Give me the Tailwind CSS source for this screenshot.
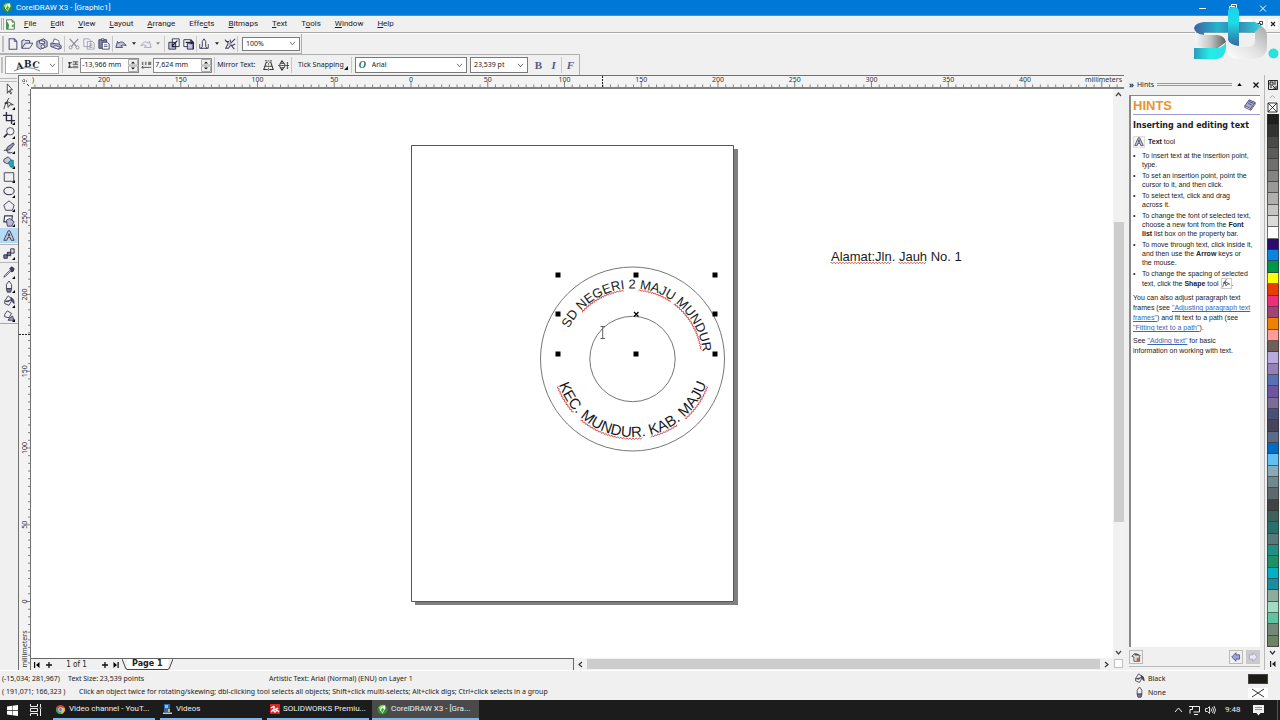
<!DOCTYPE html>
<html lang="en">
<head>
<meta charset="utf-8">
<title>CorelDRAW X3 - [Graphic1]</title>
<script src="https://cdn.jsdelivr.net/npm/@tailwindcss/browser@4"></script>
</head>
<body class="h-screen overflow-hidden flex flex-col bg-[#f0f0f0] text-[#222] font-['Noto_Sans',sans-serif] text-[7px] leading-[10px] cursor-default">

<svg class="hidden" aria-hidden="true">
  <defs>
    <linearGradient id="lav" x1="0" y1="0" x2="1" y2="1"><stop offset="0" stop-color="#fff"/><stop offset="1" stop-color="#9c9cc8"/></linearGradient>
  </defs>
  <symbol id="i-corel" viewBox="0 0 14 14"><circle cx="7" cy="7" r="6.5" fill="#2f8f2c"/><path d="M2 4Q6 0 11 2L8 6 3 7Z" fill="#8ed45c"/><path d="M5 4l5-2 1 3-4 7-3-4z" fill="#fff"/><path d="M7 4l2 3-2 4-2-3z" fill="#4aa63c"/></symbol>
  <symbol id="i-doc" viewBox="0 0 14 14"><path d="M2 1h7l3 3v9H2z" fill="#fff" stroke="#37623a"/><path d="M9 1v3h3" fill="none" stroke="#37623a"/><path d="M2 3q5 4 2 10H2z" fill="#3b9a3b"/><path d="M8 9l3-3v5z" fill="#3b9a3b"/></symbol>
  <symbol id="i-new" viewBox="0 0 14 14"><path d="M2.500 1h6l3 3v9h-9z" fill="url(#lav)" stroke="#50507a" stroke-width="1.200"/><path d="M8.500 1v3h3" fill="none" stroke="#50507a"/></symbol>
  <symbol id="i-open" viewBox="0 0 14 14"><path d="M1 12V3l3-1 1 1h5v3" fill="#dcdcf2" stroke="#3c3c5c"/><path d="M1 12l4-6h9l-4 6z" fill="url(#lav)" stroke="#3c3c5c"/></symbol>
  <symbol id="i-save" viewBox="0 0 14 14"><path d="M1 4l8-3 4 3v6l-8 3-4-3z" fill="#c4c4e0" stroke="#3c3c5c"/><path d="M4 3l6 1v3L4 6z" fill="#fff" stroke="#3c3c5c"/><circle cx="8" cy="10" r="2" fill="#fff" stroke="#3c3c5c"/></symbol>
  <symbol id="i-print" viewBox="0 0 14 14"><path d="M3 6l2-5 5 2 1 4" fill="#fff" stroke="#50507a"/><path d="M1 6l9 1 3 2v3l-3 1-9-3z" fill="#b4b4d8" stroke="#3c3c5c"/><path d="M5 9l6 1-1 3-6-2z" fill="#fff" stroke="#50507a"/></symbol>
  <symbol id="i-cut" viewBox="0 0 14 14"><path d="M2 1l8 9M12 1L4 10" fill="none" stroke="#8a8a96" stroke-width="1.4"/><circle cx="3" cy="11" r="1.8" fill="none" stroke="#8a8a96"/><circle cx="11" cy="11" r="1.8" fill="none" stroke="#8a8a96"/></symbol>
  <symbol id="i-copy" viewBox="0 0 14 14"><path d="M1 1h6l2 2v7H1zM5 4h6l2 2v7H5z" fill="#f4f4f8" stroke="#9a9aa8"/><path d="M7 7h4M7 9h4M7 11h4" stroke="#a4a4b4"/></symbol>
  <symbol id="i-paste" viewBox="0 0 14 14"><path d="M1 2h9v10H1z" fill="#8080b0" stroke="#3c3c5c"/><path d="M4 1h3v2H4z" fill="#fff" stroke="#3c3c5c"/><path d="M5 5h6l2 2v6H5z" fill="#fff" stroke="#3c3c5c"/><path d="M7 8h4M7 10h4" stroke="#50507a"/></symbol>
  <symbol id="i-undo" viewBox="0 0 14 14"><path d="M1 11l2-7 1 2q5-4 9 3-4-2-6 0l2 2z" fill="#c4c4e4" stroke="#3c3c66"/></symbol>
  <symbol id="i-redo" viewBox="0 0 14 14"><path d="M13 11l-2-7-1 2Q5 2 1 9q4-2 6 0l-2 2z" fill="#ececf2" stroke="#a4a4b4"/></symbol>
  <symbol id="i-import" viewBox="0 0 14 14"><path d="M1 5h8v8H1z" fill="#c4c4e0" stroke="#22223c"/><path d="M5 1h8v9H9V5H5z" fill="#fff" stroke="#22223c"/><path d="M11 3L5 9M5 6v4h4" fill="none" stroke="#22223c" stroke-width="1.4"/></symbol>
  <symbol id="i-export" viewBox="0 0 14 14"><path d="M1 2h8v8H1z" fill="#fff" stroke="#22223c"/><path d="M5 6h7v7H5z" fill="#c4c4e0" stroke="#22223c"/><path d="M3 5h8M9 2l3 3-3 2M12 5v8" fill="none" stroke="#22223c" stroke-width="1.4"/></symbol>
  <symbol id="i-launch" viewBox="0 0 14 14"><path d="M5 10V4l2-3 2 3v6l2 2H3z" fill="url(#lav)" stroke="#22223c"/><path d="M2 7v5h3M12 7v5H9" fill="none" stroke="#3c3c5c"/></symbol>
  <symbol id="i-online" viewBox="0 0 14 14"><path d="M1 2l4 4-3 6h3l3-4 4 5M13 1L8 6M2 4h4M7 2l1 4M9 9l4-2" fill="none" stroke="#3c3c4c" stroke-width="1.2"/><circle cx="7" cy="7" r="2" fill="#a8a8c8"/></symbol>
  <symbol id="i-caret" viewBox="0 0 6 4"><path d="M0 0h6L3 4z" fill="#222"/></symbol>
  <symbol id="i-chev" viewBox="0 0 8 6"><path d="M1 1l3 3.5L7 1" fill="none" stroke="#555" stroke-width="1"/></symbol>
  <symbol id="i-hoff" viewBox="0 0 14 12"><path d="M0 3h5M0 9h6M2 3v6M1 5l1-2 1 2M1 7l1 2 1-2M6 2h7M6 5h7M10 2v3" stroke="#222" fill="none"/><path d="M6 7h7v3H6z" fill="#888"/></symbol>
  <symbol id="i-voff" viewBox="0 0 14 12"><path d="M1 9h12M1 9l2-2M1 9l2 2" stroke="#333" fill="none"/><path d="M1 2h2v4H1zM5 2h2v4H5zM9 2h4v4H9z" fill="#777"/></symbol>
  <symbol id="i-mirh" viewBox="0 0 14 14"><path d="M4 3l-3 9h5M10 3l3 9H8M4 3h2M8 3h2M3 8h3M8 8h3" fill="none" stroke="#333" stroke-width="1.3"/><path d="M7 4v10M3 1h8M3 1l1-1M11 1l-1 1" stroke="#333" stroke-dasharray="2 1" fill="none"/></symbol>
  <symbol id="i-mirv" viewBox="0 0 14 14"><path d="M2 6l3-5 4 5M2 8l3 5 4-5M4 4h3M4 10h3" fill="none" stroke="#333" stroke-width="1.3"/><path d="M0 7h14M12 3v8M11 4l1-1 1 1M11 10l1 1 1-1" stroke="#333" fill="none"/></symbol>
  <symbol id="i-pick" viewBox="0 0 14 14"><path d="M5 1v11l2-3 2 4 1-1-2-4h3z" fill="#fff" stroke="#333"/></symbol>
  <symbol id="i-shape" viewBox="0 0 14 14"><path d="M7 0L4 5Q2 8 1 13M5 4l1 7 2-3 4 0z" fill="#e4e4f4" stroke="#333"/><path d="M2 5h3v2H2z" fill="#333"/></symbol>
  <symbol id="i-crop" viewBox="0 0 14 14"><path d="M4 0v10h10M0 4h10v10" fill="none" stroke="#2c2c3c" stroke-width="1.6"/></symbol>
  <symbol id="i-zoom" viewBox="0 0 14 14"><circle cx="8.500" cy="5" r="4.300" fill="url(#lav)" stroke="#3c3c4c"/><path d="M5 8l-4 4" stroke="#2c2c3c" stroke-width="2"/></symbol>
  <symbol id="i-free" viewBox="0 0 14 14"><path d="M12 1L5 6l-1 4 4-1 5-6zM1 10q4-2 4 1t6 1" fill="#9898b8" stroke="#33334a"/></symbol>
  <symbol id="i-smart" viewBox="0 0 14 14"><path d="M1 4l5-3 4 4-5 4-4-2z" fill="#c8c8e0" stroke="#33334a"/><path d="M6 8l3-3h3v8H9z" fill="#22a8b8" stroke="#187878"/></symbol>
  <symbol id="i-rect" viewBox="0 0 14 14"><path d="M1.500 2h11v10h-11z" fill="url(#lav)" stroke="#33334a"/></symbol>
  <symbol id="i-ell" viewBox="0 0 14 14"><ellipse cx="7" cy="7" rx="6" ry="4.300" fill="url(#lav)" stroke="#33334a" stroke-width="1.2"/></symbol>
  <symbol id="i-poly" viewBox="0 0 14 14"><path d="M7 1l6 5-2 6H3L1 6z" fill="url(#lav)" stroke="#33334a"/></symbol>
  <symbol id="i-basic" viewBox="0 0 14 14"><path d="M2 1h9l-1 7H1z" fill="#fff" stroke="#33334a" stroke-width="1.3"/><path d="M4 6l4-2 5 4-3 5H5z" fill="#b8b8d8" stroke="#33334a"/></symbol>
  <symbol id="i-text" viewBox="0 0 14 14"><path d="M1 12l5-11h2l5 11H9.500L8.500 9h-3L4.500 12zM6 7h2L7 4z" fill="#c8c8dc" stroke="#33334a"/></symbol>
  <symbol id="i-blend" viewBox="0 0 14 14"><path d="M1 8h4v4H1zM5 5h4v4H5z" fill="#77779c" stroke="#222238"/><path d="M9 1h4v5H9z" fill="#d8d8ec" stroke="#222238"/></symbol>
  <symbol id="i-drop" viewBox="0 0 14 14"><path d="M8 3l2-2 3 2-1 3-2 1z" fill="#444466" stroke="#222238"/><path d="M8 5l-6 6-1 2 2-1 6-6" fill="#fff" stroke="#33334a"/></symbol>
  <symbol id="i-outl" viewBox="0 0 14 14"><path d="M7 0l3 4v5H4V4z" fill="url(#lav)" stroke="#33334a"/><path d="M4 9h6l-1 4H5z" fill="#77779c" stroke="#33334a"/></symbol>
  <symbol id="i-fill" viewBox="0 0 14 14"><path d="M2 7l4-6 5 4-4 7-5-2z" fill="url(#lav)" stroke="#33334a"/><path d="M9 3q4 1 4 7l-3-3zM2 7l4 1 4-3" fill="#55557c" stroke="#33334a"/></symbol>
  <symbol id="i-ifill" viewBox="0 0 14 14"><path d="M2 5l3-4 5 3-3 5-5-1z" fill="url(#lav)" stroke="#33334a"/><path d="M7 10l4-3 2 5H6z" fill="#9c9cc8" stroke="#33334a"/></symbol>
  <symbol id="i-book" viewBox="0 0 14 14"><path d="M1 8l5-7 7 3-5 7z" fill="#a8a8d8" stroke="#44446c"/><path d="M1 8v2l7 3v-2M8 13l5-7V4M5 5l4 2M6 3l5 2" fill="none" stroke="#44446c"/></symbol>
  <symbol id="i-home" viewBox="0 0 14 14"><path d="M1 6l4-4 8 3-1 1v7H4V7z" fill="#ddd" stroke="#333"/><path d="M4 3l5-1 3 3H6z" fill="#555"/><path d="M8 8h3v5H8z" fill="#b06838"/></symbol>
  <symbol id="i-back" viewBox="0 0 14 14"><path d="M1 7l6-6v3h5v6H7v3z" fill="#a0a0dc" stroke="#3c3c70"/></symbol>
  <symbol id="i-fwd" viewBox="0 0 14 14"><path d="M13 7L7 1v3H2v6h5v3z" fill="#e8e8f6" stroke="#9c9cb4"/></symbol>
</svg>

<!-- Title bar -->
<header class="h-[16px] shrink-0 bg-[#0078d7] text-white flex items-center pl-[2px] font-['Roboto',sans-serif] text-[8px] border-b border-[#4c8fc4]">
  <svg class="size-[11px] mr-[3px]"><use href="#i-corel"/></svg>
  <h1 class="flex-1">CorelDRAW X3 - [Graphic1]</h1>
  <div class="flex gap-[18px] pr-3">
    <button aria-label="Minimize" class="w-3 h-3"><svg viewBox="0 0 12 12"><path d="M3 6.500h7" stroke="#fff"/></svg></button>
    <button aria-label="Restore" class="w-3 h-3"><svg viewBox="0 0 12 12"><path d="M3.500 4.500h5v5h-5zM5.500 4V2.500h5v5H9" fill="none" stroke="#fff"/></svg></button>
    <button aria-label="Close" class="w-3 h-3"><svg viewBox="0 0 12 12"><path d="M4 3.500l6 6M10 3.500l-6 6" stroke="#fff" fill="none"/></svg></button>
  </div>
</header>

<!-- Menu bar -->
<nav class="h-[17px] shrink-0 flex items-center border-b border-[#a8a8a8] pl-[1px]">
  <span class="w-[3px] h-3 border-x border-[#b0b0b0] mr-px"></span>
  <svg class="size-[11px] mr-[8px]"><use href="#i-doc"/></svg>
  <div class="flex flex-1 gap-[14px] text-[8px] font-['Roboto',sans-serif]">
    <button><u>F</u>ile</button><button><u>E</u>dit</button><button><u>V</u>iew</button><button><u>L</u>ayout</button><button><u>A</u>rrange</button><button>Effe<u>c</u>ts</button><button><u>B</u>itmaps</button><button><u>T</u>ext</button><button>T<u>o</u>ols</button><button><u>W</u>indow</button><button><u>H</u>elp</button>
  </div>
  <div class="flex gap-[3px] pr-[2px]">
    <button aria-label="Minimize document" class="bg-white size-[10px]"><svg viewBox="0 0 10 10"><path d="M3 6.500h4" stroke="#444"/></svg></button>
    <button aria-label="Restore document" class="bg-white size-[10px]"><svg viewBox="0 0 10 10"><path d="M2.500 4.500h3v3h-3zM4.500 4V2.500h3v3H6" stroke="#444" fill="none"/></svg></button>
    <button aria-label="Close document" class="bg-white size-[10px]"><svg viewBox="0 0 10 10"><path d="M3 3l4 4M7 3L3 7" stroke="#222" stroke-width="1.200"/></svg></button>
  </div>
</nav>

<!-- Standard toolbar -->
<div role="toolbar" aria-label="Standard" class="h-[21px] shrink-0 flex border-t border-white">
  <div class="flex items-center border-r border-b border-[#b0b0b0] pl-[2px] pr-[1px]">
    <span class="w-[2px] h-4 border-x border-[#c0c0c0] mr-[2px]"></span>
    <button aria-label="New" class="w-[14px] flex justify-center"><svg class="size-[12px]"><use href="#i-new"/></svg></button>
    <button aria-label="Open" class="w-[14px] flex justify-center"><svg class="size-[12px]"><use href="#i-open"/></svg></button>
    <button aria-label="Save" class="w-[15px] flex justify-center"><svg class="size-[12px]"><use href="#i-save"/></svg></button>
    <button aria-label="Print" class="w-[14px] flex justify-center"><svg class="size-[12px]"><use href="#i-print"/></svg></button>
    <span class="w-px h-4 bg-[#c8c8c8] mx-px"></span>
    <button aria-label="Cut" class="w-[15px] flex justify-center"><svg class="size-[12px]"><use href="#i-cut"/></svg></button>
    <button aria-label="Copy" class="w-[15px] flex justify-center"><svg class="size-[12px]"><use href="#i-copy"/></svg></button>
    <button aria-label="Paste" class="w-[15px] flex justify-center"><svg class="size-[12px]"><use href="#i-paste"/></svg></button>
    <span class="w-px h-4 bg-[#c8c8c8] mx-px"></span>
    <button aria-label="Undo" class="w-[14px] flex justify-center"><svg class="size-[12px]"><use href="#i-undo"/></svg></button>
    <button aria-label="Undo list" class="w-[11px] flex justify-center"><svg class="w-[4px] h-[3px]"><use href="#i-caret"/></svg></button>
    <button aria-label="Redo" class="w-[14px] flex justify-center"><svg class="size-[12px]"><use href="#i-redo"/></svg></button>
    <button aria-label="Redo list" class="w-[10px] flex justify-center opacity-50"><svg class="w-[4px] h-[3px]"><use href="#i-caret"/></svg></button>
    <span class="w-px h-4 bg-[#c8c8c8] mx-px"></span>
    <button aria-label="Import" class="w-[15px] flex justify-center"><svg class="size-[12px]"><use href="#i-import"/></svg></button>
    <button aria-label="Export" class="w-[15px] flex justify-center"><svg class="size-[12px]"><use href="#i-export"/></svg></button>
    <span class="w-px h-4 bg-[#c8c8c8]"></span>
    <button aria-label="Application launcher" class="w-[14px] flex justify-center"><svg class="size-[12px]"><use href="#i-launch"/></svg></button>
    <button aria-label="Application list" class="w-[11px] flex justify-center"><svg class="w-[4px] h-[3px]"><use href="#i-caret"/></svg></button>
    <button aria-label="Corel Online" class="w-[15px] flex justify-center"><svg class="size-[12px]"><use href="#i-online"/></svg></button>
    <span class="w-px h-4 bg-[#c8c8c8]"></span>
    <div class="w-[58px] h-[14px] ml-[4px] bg-white border border-[#7a7a7a] flex items-center px-[3px]">
      <select aria-label="Zoom level" class="flex-1 min-w-0 appearance-none bg-transparent outline-none"><option>100%</option></select>
      <svg class="w-[7px] h-[5px]"><use href="#i-chev"/></svg>
    </div>
  </div>
</div>

<!-- Property bar -->
<div role="toolbar" aria-label="Property bar" class="h-[21px] shrink-0 flex">
  <div class="flex items-center border-r border-[#b0b0b0] border-t pl-[1px] w-[580px]">
    <span class="w-[2px] h-4 border-x border-[#c0c0c0]"></span>
    <button aria-label="Text on path preset" class="ml-[2px] w-[55px] h-[18px] bg-white border border-[#a8a8a8] flex items-center justify-between pl-2 pr-[2px]">
      <svg class="w-[27px] h-[14px]" viewBox="0 0 27 14"><path d="M0 13Q13 6 26 13" fill="none" stroke="#888"/><g font-family="DejaVu Serif" font-weight="700" font-size="9" fill="#222"><text x="2" y="11" transform="rotate(-8 5 8)">A</text><text x="10" y="9">B</text><text x="18" y="10" transform="rotate(12 22 8)">C</text></g></svg>
      <svg class="w-[7px] h-[5px]"><use href="#i-chev"/></svg>
    </button>
    <span class="w-px h-4 bg-[#c8c8c8] mx-[3px]"></span>
    <label class="flex items-center"><svg class="w-[11px] h-[10px] ml-[2px] mr-px"><use href="#i-hoff"/></svg>
      <span class="w-[59px] h-[15px] bg-white border border-[#8a8a8a] flex items-center pl-px"><input aria-label="Distance from path" value="-13,966 mm" class="flex-1 min-w-0 outline-none bg-transparent">
      <svg class="w-[10px] h-[13px]" viewBox="0 0 10 13"><path d="M.5.500h9v5.500h-9zM.5 7h9v5.500h-9z" fill="#f0f0f0" stroke="#aaa"/><path d="M3 4.500h4L5 2.500zM3 8.500h4l-2 2z" fill="#111"/></svg></span></label>
    <label class="flex items-center ml-[2px]"><svg class="w-[11px] h-[10px] mr-px"><use href="#i-voff"/></svg>
      <span class="w-[59px] h-[15px] bg-white border border-[#8a8a8a] flex items-center pl-px"><input aria-label="Horizontal offset" value="7,624 mm" class="flex-1 min-w-0 outline-none bg-transparent">
      <svg class="w-[10px] h-[13px]" viewBox="0 0 10 13"><path d="M.5.500h9v5.500h-9zM.5 7h9v5.500h-9z" fill="#f0f0f0" stroke="#aaa"/><path d="M3 4.500h4L5 2.500zM3 8.500h4l-2 2z" fill="#111"/></svg></span></label>
    <span class="w-px h-4 bg-[#c8c8c8] ml-[2px] mr-[2px]"></span>
    <span class="w-[47px]">Mirror Text:</span>
    <button aria-label="Mirror horizontally" class="w-[15px]"><svg class="size-[11px]"><use href="#i-mirh"/></svg></button>
    <button aria-label="Mirror vertically" class="w-[13px]"><svg class="size-[11px]"><use href="#i-mirv"/></svg></button>
    <span class="w-px h-4 bg-[#c8c8c8] mr-[6px]"></span>
    <button class="flex items-end w-[50px] justify-between whitespace-nowrap"><span>Tick Snapping</span><svg class="size-[4px]" viewBox="0 0 4 4"><path d="M4 0v4H0z" fill="#111"/></svg></button>
    <span class="w-px h-4 bg-[#c8c8c8] mx-[3px]"></span>
    <div class="w-[114px] h-[16px] bg-white border border-[#7a7a7a] flex items-center px-[3px]">
      <span class="w-[13px] font-['Liberation_Serif',serif] italic font-bold text-[10px] text-[#1f6d58]">O</span>
      <select aria-label="Font list" class="flex-1 min-w-0 appearance-none bg-transparent outline-none"><option>Arial</option></select>
      <svg class="w-[7px] h-[5px]"><use href="#i-chev"/></svg>
    </div>
    <div class="w-[59px] h-[16px] ml-[3px] bg-white border border-[#7a7a7a] flex items-center px-[3px]">
      <select aria-label="Font size" class="flex-1 min-w-0 appearance-none bg-transparent outline-none"><option>23,539 pt</option></select>
      <svg class="w-[7px] h-[5px]"><use href="#i-chev"/></svg>
    </div>
    <div class="flex items-center flex-1 font-['Liberation_Serif',serif] text-[11px] font-bold text-[#5a5a7c] pl-[3px]">
      <button aria-label="Bold" class="w-[15px]">B</button>
      <button aria-label="Italic" class="w-[15px] italic">I</button>
      <span class="w-px h-4 bg-[#c8c8c8]"></span>
      <button aria-label="Format text" class="w-[17px] italic">F</button>
    </div>
  </div>
</div>

<!-- Workspace -->
<main class="flex-1 min-h-0 flex">
  <!-- Toolbox -->
  <div role="toolbar" aria-label="Toolbox" class="w-[18px] shrink-0 flex flex-col pt-[3px]">
    <span class="h-[4px] border-y border-[#b8b8b8] mr-px"></span>
    <div class="flex flex-col h-[146px]" data-tools="i-pick i-shape i-crop i-zoom i-free i-smart i-rect i-ell i-poly i-basic"></div>
    <button aria-label="Text" class="h-[15px] bg-[#b4daf4] flex items-center justify-center"><svg class="size-[12px]"><use href="#i-text"/></svg></button>
    <span class="h-px bg-[#b8b8b8] mt-px mb-[2px]"></span>
    <div class="flex flex-col h-[14px]" data-tools="i-blend"></div>
    <span class="h-px bg-[#b8b8b8] mt-px mb-[2px]"></span>
    <div class="flex flex-col h-[59px] border-b border-[#a8a8a8]" data-tools="i-drop i-outl i-fill i-ifill"></div>
  </div>

  <!-- Drawing window -->
  <section class="flex-1 min-w-0 flex flex-col border-l border-t border-[#707070]" aria-label="Drawing window">
    <div class="flex h-[13px] shrink-0 bg-[#f3f3f3]">
      <svg class="w-[12px] h-[13px] shrink-0" viewBox="0 0 12 13"><path d="M3 5h6M5 3v6" stroke="#333" stroke-dasharray="1 1"/><path d="M8 8l2 2" stroke="#333"/></svg>
      <div class="flex-1 min-w-0 overflow-hidden border-b-2 border-[#808080]"><svg id="hruler" class="w-full h-[11px]"></svg></div>
    </div>
    <div class="flex flex-1 min-h-0">
      <div class="w-[12px] shrink-0 overflow-hidden border-r border-[#707070] bg-[#f3f3f3]"><svg id="vruler" class="w-[11px] h-full"></svg></div>
      <div class="flex-1 min-w-0 flex flex-col">
        <div class="flex flex-1 min-h-0">
          <div class="flex-1 min-w-0 overflow-hidden bg-white">
            <svg class="w-[1082px] h-[569px]" viewBox="31 89 1082 569" font-family="Liberation Sans, Arial, sans-serif" fill="#1a1a1a">
              <path d="M734 149h4v456H415v-3h319z" fill="#808080"/>
              <path d="M411.500 145.500h322v456h-322z" fill="#fff" stroke="#555"/>
              <circle cx="632.500" cy="359" r="92" fill="none" stroke="#666" stroke-width=".9"/>
              <circle cx="632.500" cy="359" r="42.700" fill="none" stroke="#666" stroke-width=".9"/>
              <path id="arcTop" d="M568.900 328.600A70.500 70.500 0 0 1 703 359A70.500 70.500 0 0 1 700 380" fill="none"/>
              <path id="arcBottom" d="M558.800 384.500A78 78 0 0 0 706.200 384.500L707.500 380" fill="none"/>
              <text font-size="13"><textPath href="#arcTop">SD NEGERI 2 MAJU MUNDUR</textPath></text>
              <text font-size="15"><textPath href="#arcBottom">KEC. MUNDUR. KAB. MAJU</textPath></text>
              <text x="831" y="261" font-size="13">Alamat:Jln. Jauh No. 1</text>
              <g id="squiggles" fill="none" stroke="#c83232" stroke-width=".8"></g>
              <path id="handles" fill="#000"/>
              <path d="M634 312l4.500 4.500M638.500 312l-4.500 4.500" stroke="#000" stroke-width="1.300"/>
              <path d="M600.500 326.500h4.500M600.500 338.500h4.500M602.700 326.500v12" stroke="#555" stroke-width=".9"/>
            </svg>
          </div>
          <div class="w-[11px] shrink-0 flex flex-col items-center bg-[#f1f1f1]" aria-hidden="true">
            <svg class="w-[7px] h-[11px]" viewBox="0 0 7 11"><path d="M1 7l2.500-3L6 7" fill="none" stroke="#444" stroke-width="1.200"/></svg>
            <span class="grow-[122]"></span><span class="grow-[301] w-[10px] bg-[#cdcdcd]"></span><span class="grow-[125]"></span>
            <svg class="w-[7px] h-[11px]" viewBox="0 0 7 11"><path d="M1 4l2.500 3L6 4" fill="none" stroke="#444" stroke-width="1.200"/></svg>
          </div>
        </div>
        <div class="flex h-[12px] shrink-0 font-['DejaVu_Sans',sans-serif] text-[8px]">
          <div class="w-[543px] flex items-center border-t border-r border-[#666]">
            <button aria-label="First page" class="w-[12px] flex justify-center"><svg class="w-[6px] h-[6px]" viewBox="0 0 6 6"><path d="M0 0h1.200v6H0zM5.500 0v6L2 3z"/></svg></button>
            <button aria-label="Add page before" class="w-[11px] flex justify-center"><svg class="size-[6px]" viewBox="0 0 6 6"><path d="M3 0v6M0 3h6" stroke="#111" stroke-width="1.300"/></svg></button>
            <span class="w-[45px] text-center font-['DejaVu_Sans_Condensed','DejaVu_Sans',sans-serif]">1 of 1</span>
            <button aria-label="Add page after" class="w-[11px] flex justify-center"><svg class="size-[6px]" viewBox="0 0 6 6"><path d="M3 0v6M0 3h6" stroke="#111" stroke-width="1.300"/></svg></button>
            <button aria-label="Last page" class="w-[12px] flex justify-center"><svg class="w-[6px] h-[6px]" viewBox="0 0 6 6"><path d="M4.500 0h1.200v6H4.500zM.5 0v6L4 3z"/></svg></button>
            <svg class="w-[5px] h-[11px]" viewBox="0 0 5 11"><path d="M0 0l4 10h1" fill="none" stroke="#444"/></svg>
            <button class="h-[11px] px-[5px] font-bold bg-white border-b border-[#444]">Page 1</button>
            <svg class="w-[5px] h-[11px]" viewBox="0 0 5 11"><path d="M5 0L1 10H0" fill="none" stroke="#444"/></svg>
          </div>
          <div class="flex-1 flex items-center bg-[#f1f1f1]" aria-hidden="true">
            <svg class="w-[13px] h-[7px]" viewBox="0 0 13 7"><path d="M8 1L5 3.500 8 6" fill="none" stroke="#333" stroke-width="1.200"/></svg>
            <span class="flex-1 h-[10px] bg-[#cdcdcd]"></span>
            <svg class="w-[13px] h-[7px]" viewBox="0 0 13 7"><path d="M5 1l3 2.500L5 6" fill="none" stroke="#333" stroke-width="1.200"/></svg>
          </div>
          <span class="w-[9px] h-[9px] m-px bg-white border border-[#c0c0c0]"></span>
        </div>
      </div>
    </div>
  </section>

  <!-- Hints docker -->
  <aside class="w-[141px] shrink-0 flex flex-col pl-[5px] pr-[4px] pt-[3px] border-r border-[#b8b8b8]">
    <div class="flex items-center h-[13px] gap-[3px] pr-px">
      <span class="text-[8px] font-bold">»</span><span>Hints</span>
      <span class="flex-1 h-[3px] border-y border-[#999]"></span>
      <button aria-label="Roll up" class="w-[9px] flex justify-center"><svg class="w-[5px] h-[3px]" viewBox="0 0 6 4"><path d="M0 4h6L3 0z"/></svg></button>
      <button aria-label="Close docker" class="w-[12px] flex justify-end"><svg class="size-[6px]" viewBox="0 0 6 6"><path d="M.5.500l5 5M5.500.500l-5 5" stroke="#111" stroke-width="1.300"/></svg></button>
    </div>
    <div class="flex-1 mt-[4px] bg-white border-l-2 border-t border-[#888] pl-[2px] font-['Liberation_Sans',sans-serif] text-[7px] leading-[9px] whitespace-nowrap overflow-hidden">
      <div class="flex items-center justify-between h-[19px] border-b border-[#9c9cd0] pr-1">
        <h2 class="text-[13px] leading-[19px] font-bold text-[#e8942c]">HINTS</h2>
        <svg class="size-[12px]"><use href="#i-book"/></svg>
      </div>
      <h3 class="mt-[6px] text-[8px] leading-[10px] font-bold font-['DejaVu_Sans',sans-serif]">Inserting and editing text</h3>
      <p class="mt-1 flex items-center gap-[3px] h-[13px]"><span class="size-[12px] border border-[#ddd] bg-[#f6f6f6] flex items-center justify-center"><svg class="size-[10px]"><use href="#i-text"/></svg></span><span><b>Text</b> tool</span></p>
      <ul class="mt-[3px] pl-[9px] flex flex-col gap-[2px] list-none">
        <li class="before:content-['•'] before:inline-block before:w-[9px] before:-ml-[9px]">To insert text at the insertion point,<br>type.</li>
        <li class="before:content-['•'] before:inline-block before:w-[9px] before:-ml-[9px]">To set an insertion point, point the<br>cursor to it, and then click.</li>
        <li class="before:content-['•'] before:inline-block before:w-[9px] before:-ml-[9px]">To select text, click and drag<br>across it.</li>
        <li class="before:content-['•'] before:inline-block before:w-[9px] before:-ml-[9px]">To change the font of selected text,<br>choose a new font from the <b>Font<br>list</b> list box on the property bar.</li>
        <li class="before:content-['•'] before:inline-block before:w-[9px] before:-ml-[9px]">To move through text, click inside it,<br>and then use the <b>Arrow</b> keys or<br>the mouse.</li>
        <li class="before:content-['•'] before:inline-block before:w-[9px] before:-ml-[9px]">To change the spacing of selected<br><span class="flex items-center">text, click the&nbsp;<b>Shape</b>&nbsp;tool&nbsp;<svg class="size-[11px] border border-[#ccc]"><use href="#i-shape"/></svg>.</span></li>
      </ul>
      <p class="mt-1 leading-[10px]">You can also adjust paragraph text<br>frames (see <a href="#frames" class="text-[#3c66b0] underline">"Adjusting paragraph text<br>frames"</a>) and fit text to a path (see<br><a href="#fit" class="text-[#3c66b0] underline">"Fitting text to a path"</a>).</p>
      <p class="mt-[3px] leading-[10px]">See <a href="#add" class="text-[#3c66b0] underline">"Adding text"</a> for basic<br>information on working with text.</p>
    </div>
    <div class="flex items-center h-[20px] gap-[3px] border-b border-[#bbb] mb-[3px]">
      <button aria-label="Home" class="size-[14px] border border-[#bbb] flex items-center justify-center mr-auto"><svg class="size-[10px]"><use href="#i-home"/></svg></button>
      <button aria-label="Back" class="size-[14px] border border-[#bbb] flex items-center justify-center"><svg class="size-[10px]"><use href="#i-back"/></svg></button>
      <button aria-label="Forward" class="size-[14px] bg-[#cacaca] flex items-center justify-center"><svg class="size-[10px]"><use href="#i-fwd"/></svg></button>
    </div>
  </aside>

  <!-- Colour palette -->
  <div class="w-[15px] shrink-0 flex flex-col items-center pt-[5px]" aria-label="Color palette">
    <svg class="size-[10px]" viewBox="0 0 10 10"><path d="M.5.500h9v9h-9z" fill="#ddd" stroke="#222"/><path d="M2 2h3v3H2zM6 2h2M6 4h2M2 7h2M5 6l3 3M8 6v3H5" stroke="#222" fill="none"/></svg>
    <svg class="w-[7px] h-[12px]" viewBox="0 0 7 12"><path d="M1 8l2.500-2.500L6 8" fill="none" stroke="#aaa"/></svg>
    <svg class="size-[11px] mb-px" viewBox="0 0 11 11"><path d="M1 1h9v9H1zM1 1l9 9M10 1l-9 9" fill="#fff" stroke="#222" stroke-width=".9"/></svg>
    <div id="palette" class="w-[12px] flex-1 flex flex-col"></div>
    <svg class="w-[7px] h-[12px]" viewBox="0 0 7 12"><path d="M1 4l2.500 3L6 4" fill="none" stroke="#333" stroke-width="1.200"/></svg>
    <svg class="w-[6px] h-[10px] mb-[1px]" viewBox="0 0 6 10"><path d="M0 2h1.200v6H0zM5.500 2v6L2 5z" fill="#222"/></svg>
  </div>
</main>

<!-- Status bar -->
<footer class="h-[30px] shrink-0 border-t border-white flex justify-between pl-[2px] pr-3 whitespace-nowrap">
  <div class="flex flex-col justify-center gap-[3px] flex-1">
    <p class="flex"><span class="w-[66px]">(-15,034; 281,967)</span><span class="w-[201px]">Text Size: 23,539 points</span><span>Artistic Text: Arial (Normal) (ENU) on Layer 1</span></p>
    <p class="flex"><span class="w-[77px]">( 191,071; 166,323 )</span><span>Click an object twice for rotating/skewing; dbl-clicking tool selects all objects; Shift+click multi-selects; Alt+click digs; Ctrl+click selects in a group</span></p>
  </div>
  <div class="w-[134px] flex flex-col justify-center gap-[3px]">
    <p class="flex items-center"><svg class="size-[11px] mr-[3px]"><use href="#i-fill"/></svg><span class="flex-1">Black</span><span class="w-[20px] h-[10px] bg-[#1c1c14] border border-[#444]"></span></p>
    <p class="flex items-center"><svg class="size-[11px] mr-[3px]"><use href="#i-outl"/></svg><span class="flex-1">None</span><svg class="w-[20px] h-[10px] bg-white" viewBox="0 0 20 10"><path d="M4 1l12 8M16 1L4 9" stroke="#333"/></svg></p>
  </div>
</footer>

<!-- Taskbar -->
<nav class="h-[20px] shrink-0 bg-[#1c1c1c] text-[#f0f0f0] flex font-['Roboto',sans-serif] text-[8px]" aria-label="Taskbar">
  <button aria-label="Start" class="w-[24px] flex items-center justify-center"><svg class="size-[11px]" viewBox="0 0 11 11"><path d="M0 1.500l5-.7v4.500H0zM5.500.700L11 0v5.300H5.500zM0 6h5v4.300l-5-.7zM5.500 6H11v5l-5.500-.7z" fill="#fff"/></svg></button>
  <button aria-label="Task view" class="w-[23px] mr-[6px] flex items-center justify-center"><svg class="size-[12px]" viewBox="0 0 12 12"><path d="M.5 0v2.500h7V0M.5 12V9.500h7V12M.5 4.500h7v3h-7zM10.500 0v3M10.500 5v7M9.500 4h2" fill="none" stroke="#eee"/></svg></button>
  <button class="w-[102px] mr-[5px] pl-[3px] flex items-center gap-[4px] border-b-2 border-[#76b9ed]"><svg class="size-[9px]" viewBox="0 0 10 10"><circle cx="5" cy="5" r="5" fill="#e33b2e"/><path d="M.7 2.500A5 5 0 0 0 5 10l2-4L3 6z" fill="#38a852"/><path d="M9.500 3H5l2 3-2 4A5 5 0 0 0 9.500 3z" fill="#fbc116"/><circle cx="5" cy="5" r="2.200" fill="#4285f4" stroke="#fff" stroke-width=".6"/></svg>Video channel - YouT...</button>
  <button class="w-[102px] mr-[5px] pl-[3px] flex items-center gap-[4px] border-b-2 border-[#76b9ed]"><svg class="w-[9px] h-[10px]" viewBox="0 0 9 10"><path d="M1 0h6v8H1z" fill="#2b6cb0"/><path d="M2 1h3v3H2z" fill="#9bd"/><path d="M5 5h2v3H5z" fill="#e2b83c"/><path d="M0 8.500h9V10H0z" fill="#ccc"/></svg>Videos</button>
  <button class="w-[102px] mr-[3px] pl-[3px] flex items-center gap-[3px] border-b-2 border-[#76b9ed]"><svg class="size-[10px]" viewBox="0 0 10 10"><path d="M0 0h10v10H0z" fill="#d22"/><path d="M1 4q4-3 3 0t4 0M1 8l2-2 2 2 2-2 2 2" fill="none" stroke="#fff" stroke-width="1.300"/></svg>SOLIDWORKS Premiu...</button>
  <button class="w-[107px] pl-[5px] flex items-center gap-[3px] bg-[#4a4a4a] border-b-2 border-[#76b9ed]"><svg class="size-[11px]"><use href="#i-corel"/></svg>CorelDRAW X3 - [Gra...</button>
  <div class="ml-auto flex items-center">
    <svg class="w-[9px] h-[6px] mr-[6px]" viewBox="0 0 9 6"><path d="M1 5l3.500-4L8 5" fill="none" stroke="#eee"/></svg>
    <svg class="w-[11px] h-[10px] mr-[5px]" viewBox="0 0 11 10"><path d="M2.500 1.500h8v5.500h-6M0 1.500h3.500v3H1v4M5 9.500h4" fill="none" stroke="#eee"/></svg>
    <svg class="w-[11px] h-[10px] mr-[9px]" viewBox="0 0 11 10"><path d="M.5 3.500h2l2-2v7l-2-2h-2zM6 3.500q1 1.500 0 3M7.500 2q2 3 0 6M9 1q3 4 0 8" fill="none" stroke="#eee" stroke-width=".9"/></svg>
    <time class="w-[28px]">9:48</time>
    <svg class="w-[11px] h-[11px] mr-[13px]" viewBox="0 0 11 11"><path d="M0 0h11v8H7.500L5.500 10.500 3.500 8H0z" fill="#eee"/><path d="M2 2.500h7M2 4.500h7" stroke="#777" stroke-width=".8"/></svg>
    <span class="w-px h-[20px] bg-[#555] mr-[2px]"></span>
  </div>
</nav>

<!-- Channel logo laid over the window corner -->
<svg class="absolute top-0 right-0 w-[90px] h-[64px] pointer-events-none" viewBox="1190 0 90 64" role="img" aria-label="sb.">
  <defs>
    <linearGradient id="g1"><stop offset="0" stop-color="#3c64a4"/><stop offset=".35" stop-color="#25b4cc"/><stop offset=".6" stop-color="#3a7cb0"/><stop offset="1" stop-color="#2cd8dc"/></linearGradient>
    <linearGradient id="g2"><stop offset="0" stop-color="#f8f8f8"/><stop offset=".5" stop-color="#c4c4c4"/><stop offset="1" stop-color="#606060"/></linearGradient>
    <linearGradient id="g3"><stop offset="0" stop-color="#2e9cbc"/><stop offset=".5" stop-color="#24ece8"/><stop offset="1" stop-color="#2ce0e0"/></linearGradient>
    <linearGradient id="g4" x1="0" y1="0" x2="0" y2="1"><stop offset="0" stop-color="#18d4ec"/><stop offset=".4" stop-color="#20dce4"/><stop offset="1" stop-color="#3468a0"/></linearGradient>
    <linearGradient id="g5" x1="0" y1="1" x2="1" y2="0"><stop offset="0" stop-color="#fff"/><stop offset=".5" stop-color="#e0e0e0"/><stop offset="1" stop-color="#a8a8a8"/></linearGradient>
  </defs>
  <path d="M1204 22h51l7 4-5 6.500h-53v2.500q-9-1-10-7 1-5 10-6z" fill="url(#g1)"/>
  <path d="M1195 31q2 4 9 4h13q8 1 9 7l-8 6h-14q-8-1-9-7z" fill="url(#g2)"/>
  <path d="M1194 48h24q6-1 8-6 1 16-9 17h-23z" fill="url(#g3)"/>
  <path d="M1255 32l6-6q6 3 6 10v10q0 12-13 13h-16q-9 0-11-8v-8q8 5 11 4h11q6-1 6-7z" fill="url(#g5)"/>
  <path d="M1228 12q0-5 5.500-5t5.500 5v34q-9-1-11-6z" fill="url(#g4)"/>
  <circle cx="1273.500" cy="53.500" r="5" fill="#2ce0dc"/>
</svg>

<script>
const NS = 'http://www.w3.org/2000/svg';

// Toolbox buttons; every tool but Pick has a flyout mark
document.querySelectorAll('[data-tools]').forEach(box => {
  box.innerHTML = box.dataset.tools.split(' ').map(id =>
    `<button aria-label="${id.slice(2)} tool" class="flex-1 flex items-center justify-center relative"><svg class="size-[12px]"><use href="#${id}"/></svg>${
      id === 'i-pick' ? '' : '<svg class="absolute right-[3px] bottom-[1px] size-[3px]" viewBox="0 0 4 4"><path d="M4 0v4H0z"/></svg>'}</button>`).join('');
});

// Rulers: one tick every 5 mm, a label every 50 mm
const STEP = 7.675;
const text = (x, y, s, extra = '') => `<text x="${x}" y="${y}" ${extra}>${s}</text>`;
let h = '', v = '', marks = '';
for (let i = -49; i < 93; i++) {
  const x = 380 + i * STEP;
  h += `M${x} ${i % 10 ? 8.5 : 5.5}V11`;
  if (i % 10 === 0 && i < 90) marks += text(x, 6, Math.abs(i * 5), 'text-anchor="middle"');
}
document.getElementById('hruler').innerHTML =
  `<path d="${h}" stroke="#666" stroke-width=".8"/><path d="M571.500 0v11" stroke="#222" stroke-dasharray="2 1"/><g font-family="Noto Sans" font-size="7" fill="#333">${marks}${text(1091, 6, 'millimeters', 'text-anchor="end"')}${text(1, 6, ')')}</g>`;
marks = '';
for (let i = -8; i < 67; i++) {
  const y = 512.5 - i * STEP;
  v += `M${i % 10 ? 9 : 7} ${y}H11`;
  if (i % 10 === 0) marks += text(0, 0, i * 5, `text-anchor="middle" transform="translate(8 ${y}) rotate(-90)"`);
}
document.getElementById('vruler').innerHTML =
  `<path d="${v}" stroke="#666" stroke-width=".8"/><path d="M0 245.500h11" stroke="#222" stroke-dasharray="2 1"/><g font-family="Noto Sans" font-size="7" fill="#333">${marks}${text(0, 0, 'millimeters', 'text-anchor="middle" transform="translate(8 560) rotate(-90)"')}</g>`;

// Selection handles
document.getElementById('handles').setAttribute('d',
  [[558, 275], [636, 275], [715, 275], [558, 314], [715, 314], [558, 354], [636, 354], [715, 354]]
    .map(([x, y]) => `M${x - 2.5} ${y - 2.5}h5v5h-5z`).join(''));

// Spelling squiggles; angles are in degrees clockwise from straight up
function arcWave(from, to, r) {
  let d = '', k = 0;
  for (let a = from; a <= to; a += 1.1, k++) {
    const t = a * Math.PI / 180, q = r + (k % 2 ? 0.7 : -0.7);
    d += `${k ? 'L' : 'M'}${(632.5 + q * Math.sin(t)).toFixed(2)} ${(359 - q * Math.cos(t)).toFixed(2)}`;
  }
  return d;
}
function lineWave(x1, x2, y) {
  let d = `M${x1} ${y}`;
  for (let x = x1, k = 0; x <= x2; x += 1.5, k++) d += `L${x} ${y + (k % 2 ? 0.8 : -0.8)}`;
  return d;
}
document.getElementById('squiggles').innerHTML = `<path d="${[
  arcWave(-47, -7, 69), arcWave(5, 34, 69), arcWave(37, 83, 69),
  arcWave(228, 250, 79.8), arcWave(173, 221, 79.8), arcWave(146, 167, 79.8), arcWave(110, 139, 79.8),
  lineWave(831, 892, 263), lineWave(899, 926, 263)].join('')}"/>`;

// Palette swatches from top to bottom
document.getElementById('palette').innerHTML = ('#1f1f1d #333332 #4a4a49 #5c5c5b #6f6f6e #848483 #999998 #afafae #c5c5c3 #dbdbd9 #ffffff #2c0a70 #0a86e0 #00964a #ffff00 #e83c00 #f02c7c #a04478 #ee8100 #ff9c96 #6e6056 #b8aadc #9480b8 #5a70b4 #6c56a0 #7a6c94 #465078 #48445c #5c6a88 #006cc4 #60c0f4 #88a8bc #70888e #5c6a6e #404344 #40605c #28706a #587a7c #209084 #1e9068 #00b0c4 #1c8ca0 #8cac9c #a0dcc4 #5cc4a0 #748878 #6c8464')
  .split(' ').map(c => `<button aria-label="${c}" class="flex-1 border-x border-b border-[#333]/70" style="background:${c}"></button>`).join('');
</script>
</body>
</html>
